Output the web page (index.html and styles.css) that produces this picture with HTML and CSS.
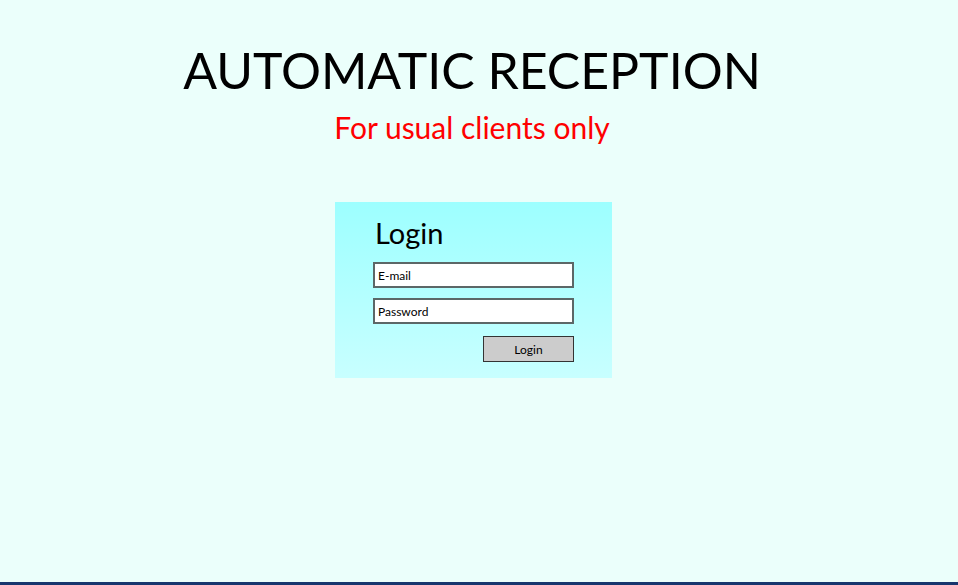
FILE: index.html
```html
<!DOCTYPE html>
<html>
<head>
<meta charset="utf-8">
<link rel="stylesheet" href="styles.css">
</head>
<body>
<div class="page">
  <h1 class="title">AUTOMATIC RECEPTION</h1>
  <p class="subtitle">For usual clients only</p>
  <div class="card">
    <h2 class="card-title">Login</h2>
    <div class="field"><span>E-mail</span></div>
    <div class="field"><span>Password</span></div>
    <div class="actions"><div class="btn">Login</div></div>
  </div>
</div>
<div class="bottom-bar"></div>
</body>
</html>
```
FILE: styles.css
```css
html, body { margin: 0; padding: 0; }
body {
  background: #ebfffb;
  font-family: Lato, "Open Sans", sans-serif;
  height: 585px;
  display: flex;
  flex-direction: column;
}
.page {
  flex: 1;
  display: flex;
  flex-direction: column;
  align-items: center;
  padding-right: 14px;
}
.title {
  margin: 40px 0 0 0;
  font-size: 50px;
  font-weight: 400;
  line-height: 60px;
  color: #000;
}
.subtitle {
  margin: 9px 0 0 0;
  font-size: 30px;
  line-height: 36px;
  color: #ff0000;
}
.card {
  margin-top: 57px;
  width: 277px;
  height: 176px;
  box-sizing: border-box;
  background: linear-gradient(#9dffff, #c8ffff);
  padding: 13px 38px 0 38px;
  margin-left: 3px;
}
.card-title {
  margin: 0 0 11px 2px;
  font-size: 29px;
  font-weight: 400;
  line-height: 36px;
}
.field {
  width: 201px;
  height: 26px;
  box-sizing: border-box;
  background: #fff;
  border: 2px solid #5c6767;
  display: flex;
  align-items: center;
  padding-left: 3px;
  font-size: 12px;
  margin-bottom: 10px;
}
.actions {
  width: 201px;
  display: flex;
  justify-content: flex-end;
  margin-top: 12px;
}
.btn {
  width: 91px;
  height: 26px;
  box-sizing: border-box;
  background: #cccccc;
  border: 1px solid #333;
  font-size: 12px;
  display: flex;
  align-items: center;
  justify-content: center;
}
.bottom-bar {
  height: 3px;
  background: #17366e;
}
```
